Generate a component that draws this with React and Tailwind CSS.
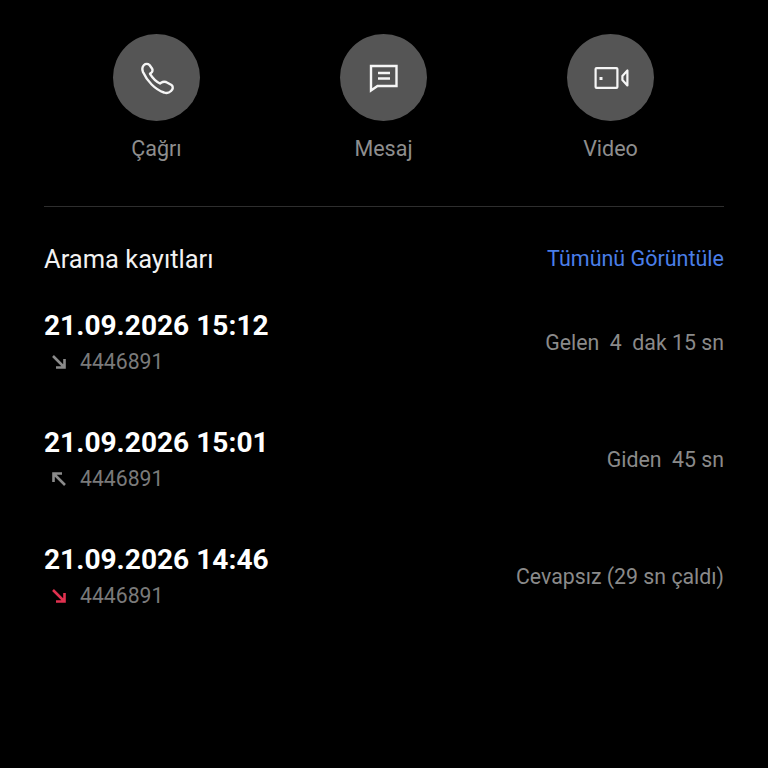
import { useState } from "react";

const calls = [
  { date: "21.09.2026 15:12", info: "Gelen  4  dak 15 sn", dir: "in" },
  { date: "21.09.2026 15:01", info: "Giden  45 sn", dir: "out" },
  { date: "21.09.2026 14:46", info: "Cevapsız (29 sn çaldı)", dir: "missed" },
];

function PhoneIcon() {
  return (
    <svg width="36" height="36" viewBox="0 0 36 36" fill="none" stroke="#f5f5f5" strokeWidth="2.4" strokeLinejoin="round" strokeLinecap="round">
      <path d="M5 5 C6.5 3.5 9 3.5 10.5 5 L13 8.5 C14 10 13.5 12 12 13 L11 13.8 C13 17 17 21.5 21 23.5 L22.5 22.5 C24 21.5 25.5 21.5 27 22 L32.5 25 C34.5 26.5 34 29.5 32 31 C30 33 27.5 33.5 25 32.5 C16 29.5 8 21 4 12 C3 9.5 3.5 6.5 5 5 Z" />
    </svg>
  );
}

function MessageIcon() {
  return (
    <svg width="30" height="30" viewBox="0 0 30 30" fill="none" stroke="#f5f5f5" strokeWidth="2.4" strokeLinejoin="miter">
      <path d="M2 3 H27.5 V23 H8.5 L2 27.5 Z" />
      <path d="M9 10 H21 M9 15.5 H21" />
    </svg>
  );
}

function VideoIcon() {
  return (
    <svg width="36" height="26" viewBox="0 0 36 26" fill="none" stroke="#f5f5f5" strokeWidth="2.2" strokeLinejoin="round">
      <rect x="2.6" y="3.1" width="21.8" height="19.8" rx="1" />
      <rect x="6.5" y="12" width="3" height="3" fill="#f5f5f5" stroke="none" />
      <path d="M29.4 11 L34.4 5.5 V20.5 L29.4 15 Z" />
    </svg>
  );
}

function ActionButton({ icon, label }) {
  return (
    <div className="flex flex-col items-center">
      <div className="w-[87px] h-[87px] rounded-full bg-[#555555] flex items-center justify-center">
        {icon}
      </div>
      <span className="mt-[14px] text-[21.5px] leading-[28px] text-[#8e8e8e]">{label}</span>
    </div>
  );
}

function DirArrow({ dir }) {
  const color = dir === "missed" ? "#e0314f" : "#8a8a8a";
  return (
    <svg width="16" height="16" viewBox="0 0 16 16" fill="none" stroke={color} strokeWidth="2.6" className="ml-[7px] mr-[13px]">
      {dir === "out" ? (
        <path d="M14 14 L3 3 M2.5 11 V2.5 H11" />
      ) : (
        <path d="M2 2 L13 13 M13.5 5 V13.5 H5" />
      )}
    </svg>
  );
}

export default function App() {
  const [items] = useState(calls);

  return (
    <main className="w-[768px] h-[768px] bg-black overflow-hidden font-['Roboto',sans-serif]">
      {/* top actions */}
      <section className="pt-[34px] pl-[43px] pr-[44px] grid grid-cols-3">
        <ActionButton icon={<PhoneIcon />} label="Çağrı" />
        <ActionButton icon={<MessageIcon />} label="Mesaj" />
        <ActionButton icon={<VideoIcon />} label="Video" />
      </section>

      <div className="mx-[44px] mt-[43px] h-px bg-[#2e2e2e]" />

      {/* call log */}
      <section className="mx-[44px] mt-[36px]">
        <div className="flex items-center justify-between h-[32px]">
          <h2 className="text-[25.5px] text-[#f2f2f2]">Arama kayıtları</h2>
          <a className="text-[21.5px] text-[#4a7ee8]">Tümünü Görüntüle</a>
        </div>

        <ul className="mt-[25px] flex flex-col gap-[33px]">
          {items.map((c) => (
            <li key={c.date} className="flex items-center justify-between h-[84px]">
              <div>
                <div className="text-[28.1px] leading-[36px] font-bold text-white">{c.date}</div>
                <div className="mt-[4px] flex items-center">
                  <DirArrow dir={c.dir} />
                  <span className="text-[21.2px] leading-[28px] text-[#7a7a7a]">4446891</span>
                </div>
              </div>
              <div className="text-[21.3px] text-[#8a8a8a] whitespace-pre mt-[2px]">{c.info}</div>
            </li>
          ))}
        </ul>
      </section>
    </main>
  );
}
